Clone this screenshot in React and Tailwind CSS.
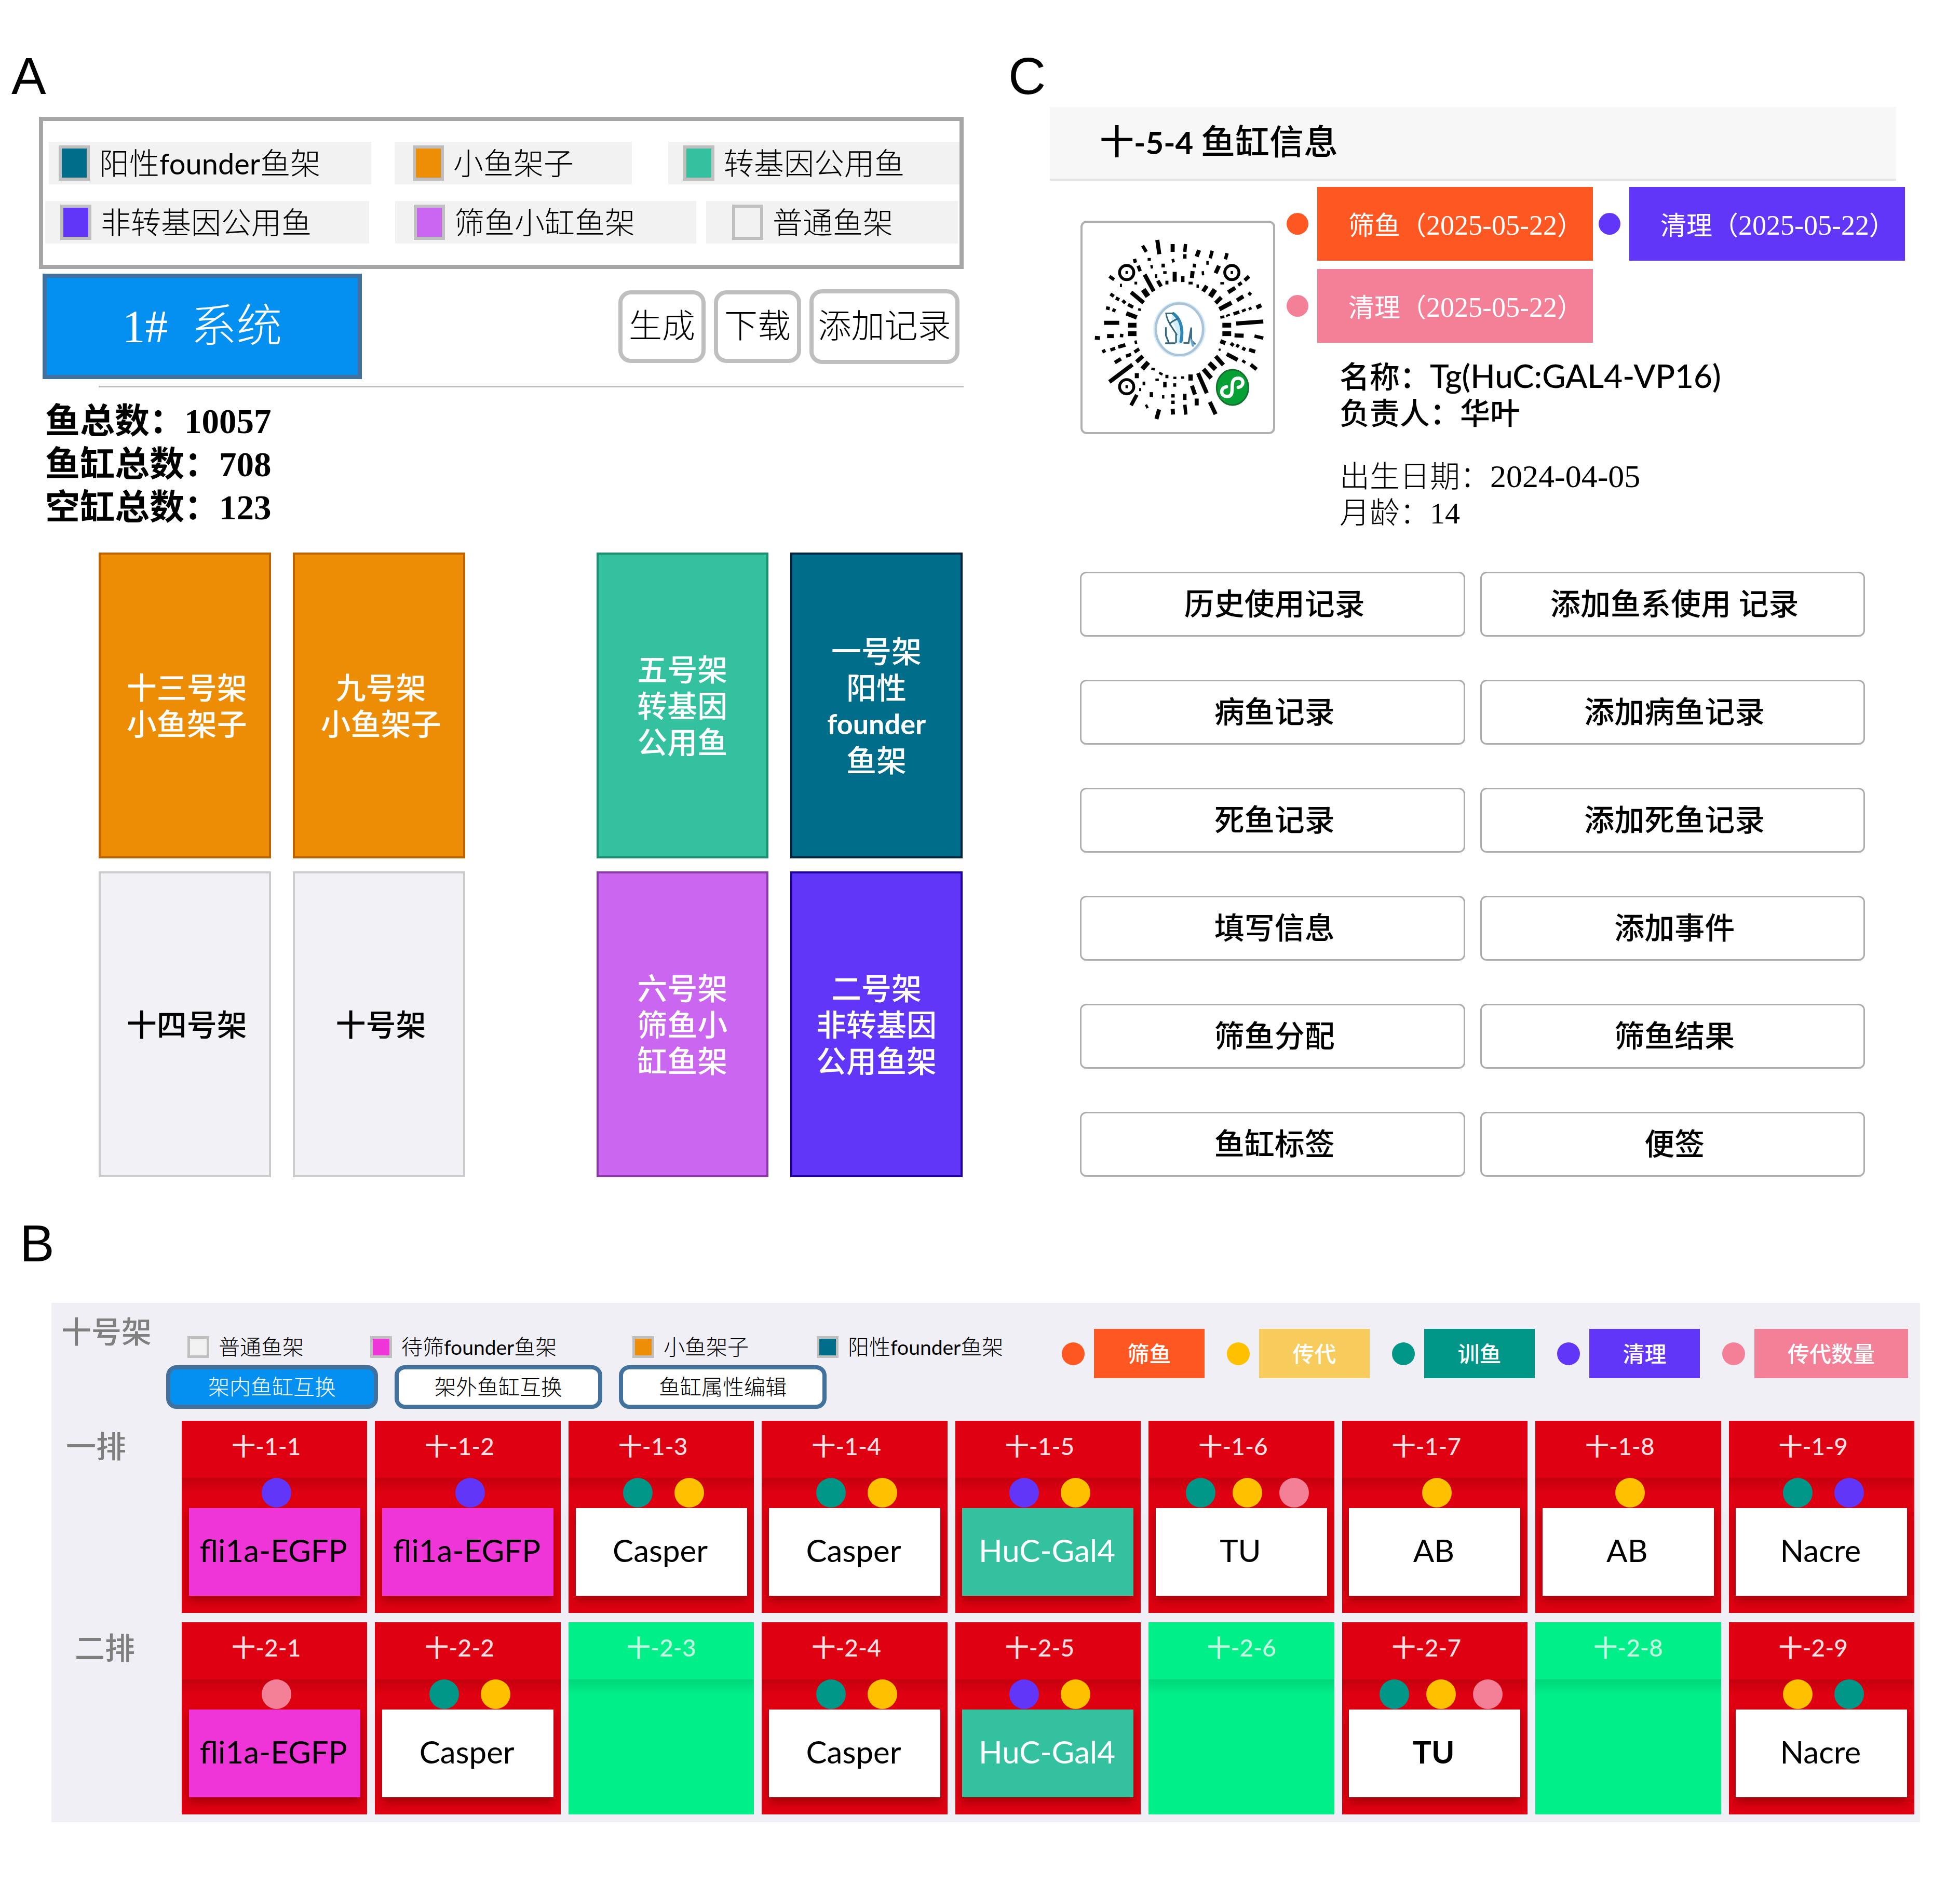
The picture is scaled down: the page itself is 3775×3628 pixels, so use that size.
import React from "react";

const SERIF = "font-['Liberation_Serif','Noto_Sans_CJK_SC',serif]";
const LATO = "font-['Lato','Noto_Sans_CJK_SC',sans-serif]";

const rackLegend = [
  [
    { color: "ml-[19px] bg-[#006e8a]", box: "flex-[621]", text: ["阳性", "founder", "鱼架"] },
    { color: "ml-[35px] bg-[#ee8e06]", box: "flex-[457] ml-[45px]", text: ["小鱼架子"] },
    { color: "ml-[29px] bg-[#33c19f]", box: "flex-[561] ml-[70px]", text: ["转基因公用鱼"] },
  ],
  [
    { color: "ml-[29px] bg-[#6236f9]", box: "flex-[624]", text: ["非转基因公用鱼"] },
    { color: "ml-[36px] bg-[#cb66f2]", box: "flex-[580] ml-[50px]", text: ["筛鱼小缸鱼架"] },
    { color: "ml-[50px] bg-[#f2f2f2]", box: "flex-[485] ml-[19px]", text: ["普通鱼架"] },
  ],
];

const rackGroups = [
  [
    { lines: ["十三号架", "小鱼架子"], style: "bg-[#ed8d05] border-[#bd6300] text-white pl-2" },
    { lines: ["九号架", "小鱼架子"], style: "bg-[#ed8d05] border-[#bd6300] text-white pl-2" },
    { lines: ["十四号架"], style: "bg-[#f1f1f6] border-[#cccccc] text-black pl-2" },
    { lines: ["十号架"], style: "bg-[#f1f1f6] border-[#cccccc] text-black pl-2" },
  ],
  [
    { lines: ["五号架", "转基因", "公用鱼"], style: "bg-[#33c19f] border-[#1b8f70] text-white" },
    { lines: ["一号架", "阳性", "founder", "鱼架"], style: "bg-[#006e8a] border-[#00243f] text-white" },
    { lines: ["六号架", "筛鱼小", "缸鱼架"], style: "bg-[#ca66f0] border-[#8b3aaa] text-white" },
    { lines: ["二号架", "非转基因", "公用鱼架"], style: "bg-[#6236f9] border-[#1c00a2] text-white" },
  ],
];

const actions = [
  "历史使用记录", "添加鱼系使用 记录",
  "病鱼记录", "添加病鱼记录",
  "死鱼记录", "添加死鱼记录",
  "填写信息", "添加事件",
  "筛鱼分配", "筛鱼结果",
  "鱼缸标签", "便签",
];

const DOT = {
  blue: "bg-[#6236f9]",
  teal: "bg-[#009688]",
  gold: "bg-[#ffc000]",
  pink: "bg-[#f48098]",
};

const tankRows = [
  {
    name: "一排",
    pad: "pl-[28px]",
    tanks: [
      { id: "十-1-1", dots: ["blue"], label: "fli1a-EGFP", kind: "magenta" },
      { id: "十-1-2", dots: ["blue"], label: "fli1a-EGFP", kind: "magenta" },
      { id: "十-1-3", dots: ["teal", "gold"], label: "Casper", kind: "white" },
      { id: "十-1-4", dots: ["teal", "gold"], label: "Casper", kind: "white" },
      { id: "十-1-5", dots: ["blue", "gold"], label: "HuC-Gal4", kind: "green" },
      { id: "十-1-6", dots: ["teal", "gold", "pink"], label: "TU", kind: "white" },
      { id: "十-1-7", dots: ["gold"], label: "AB", kind: "white" },
      { id: "十-1-8", dots: ["gold"], label: "AB", kind: "white" },
      { id: "十-1-9", dots: ["teal", "blue"], label: "Nacre", kind: "white" },
    ],
  },
  {
    name: "二排",
    pad: "pl-[45px]",
    tanks: [
      { id: "十-2-1", dots: ["pink"], label: "fli1a-EGFP", kind: "magenta" },
      { id: "十-2-2", dots: ["teal", "gold"], label: "Casper", kind: "white" },
      { id: "十-2-3" },
      { id: "十-2-4", dots: ["teal", "gold"], label: "Casper", kind: "white" },
      { id: "十-2-5", dots: ["blue", "gold"], label: "HuC-Gal4", kind: "green" },
      { id: "十-2-6" },
      { id: "十-2-7", dots: ["teal", "gold", "pink"], label: "TU", kind: "whiteBold" },
      { id: "十-2-8" },
      { id: "十-2-9", dots: ["gold", "teal"], label: "Nacre", kind: "white" },
    ],
  },
];

const LABEL = {
  magenta: "bg-[#f035d8] text-black",
  white: "bg-white text-black",
  whiteBold: "bg-white text-black font-bold",
  green: "bg-[#33c19f] text-white",
};

const tankLegend = [
  { color: "bg-[#f2f2f2]", text: ["普通鱼架"] },
  { color: "bg-[#f035d8]", text: ["待筛", "founder", "鱼架"] },
  { color: "bg-[#ee8e06]", text: ["小鱼架子"] },
  { color: "bg-[#006e8a]", text: ["阳性", "founder", "鱼架"] },
];

const eventLegend = [
  { dot: "bg-[#ff5722]", box: "bg-[#ff5722] w-[213px]", text: "筛鱼" },
  { dot: "bg-[#ffc000]", box: "bg-[#f8cc5c] w-[213px]", text: "传代" },
  { dot: "bg-[#009688]", box: "bg-[#009688] w-[213px]", text: "训鱼" },
  { dot: "bg-[#6236f9]", box: "bg-[#6236f9] w-[213px]", text: "清理" },
  { dot: "bg-[#f48098]", box: "bg-[#f48098] w-[296px]", text: "传代数量" },
];

// Radial code strokes: x1, y1, x2, y2 and an optional width.
const marks = [
  [418,212,440,248],[505,178,517,262,24],[596,202,596,248,24],[672,202,668,248],[752,238,738,276,24],[830,242,818,286],
  [918,256,908,292],[668,262,668,288],[370,290,376,312],[448,292,467,292,16],[470,326,474,346,14],[596,290,602,310,16],
  [540,318,540,340],[726,318,724,340],[802,302,802,324,14],[870,330,850,374,24],[774,362,776,386,14],[392,330,404,362],
  [550,362,550,378],[498,380,498,402,14],[714,362,710,402,24],[608,366,608,424,24],[656,392,656,426],[222,392,250,412],
  [430,382,484,480,24],[508,418,528,452,22],[562,418,562,440,18],[702,424,702,440,24],[744,440,744,460,14],[378,424,378,440,16],
  [290,436,290,456,12],[422,470,450,510,32],[350,486,424,548,24],[798,448,776,482,24],[846,470,818,512,30],[884,516,850,550,24],
  [1048,392,1022,416,22],[1004,430,984,444],[966,460,924,486,24],[878,433,900,433,14],[1058,488,1046,502],[1014,510,976,534,24],
  [944,548,872,586,26],[1120,562,1092,576,24],[1062,578,1046,586,16],[1028,588,1006,598,16],[990,602,956,614],[934,618,912,626,12],
  [902,630,878,634,16],[972,670,1132,658,24],[890,680,942,680,28],[890,730,942,730,28],[962,740,1016,742,24],[1080,744,1132,756],
  [878,774,908,786,24],[940,786,956,800],[972,796,988,806],[1008,814,1026,824],[1048,824,1084,836,22],[872,818,876,830,12],
  [916,850,980,884,24],[1008,888,1026,900,16],[1058,912,1092,940,22],[850,862,896,914,24],[812,902,850,940,28],[778,938,824,992,26],
  [746,962,798,1080,24],[702,970,702,1006,26],[646,988,664,988,14],[600,990,618,990,14],[710,1036,728,1088,24],[738,1112,738,1152,24],
  [816,1132,850,1204,24],[668,1084,668,1120],[668,1148,674,1206],[596,1172,598,1206,24],[598,1086,598,1106],[598,1124,598,1144],
  [608,1022,608,1042,18],[550,1014,550,1046],[562,972,562,992,18],[516,960,536,970,14],[470,936,490,940,14],[494,1002,514,1000,14],
  [540,1092,540,1112,14],[470,1074,470,1104],[516,1176,500,1232,24],[438,1148,448,1168,14],[426,1012,426,1034,16],[404,1050,404,1068,12],
  [384,1090,350,1152,22],[384,962,384,992,24],[452,898,416,938,28],[420,862,382,896,24],[398,820,370,838],[350,852,320,862],
  [290,878,254,900,22],[358,912,222,1014,24],[376,770,380,790,14],[332,680,382,680,28],[332,730,382,730,28],[284,740,304,742],
  [208,744,248,744,24],[136,754,166,756,22],[316,796,274,808,22],[256,816,228,826],[198,828,180,838],[190,666,280,666,24],
  [322,610,384,634,26],[392,586,408,590,14],[202,578,224,582],[240,588,258,596],[332,558,362,574],[300,534,316,550],
  [260,520,280,530],[228,496,248,510],
];

function Mixed({ parts, latin }) {
  return (
    <span>
      {parts.map((p) => (/^[a-z]/.test(p) ? <span key={p} className={latin}>{p}</span> : p))}
    </span>
  );
}

function RadialCode() {
  return (
    <svg viewBox="63 77 1127 1232" preserveAspectRatio="none" className="block h-full w-full" role="img" aria-label="code">
      <g stroke="#000">
        {marks.map(([x1, y1, x2, y2, w], i) => (
          <line key={i} x1={x1} y1={y1} x2={x2} y2={y2} strokeWidth={w || 20} />
        ))}
      </g>
      {[[324, 370], [946, 370], [324, 1042]].map(([x, y]) => (
        <g key={`${x}-${y}`}>
          <circle cx={x} cy={y} r="42" fill="#fff" stroke="#000" strokeWidth="17" />
          <rect x={x - 7} y={y - 9} width="14" height="18" />
        </g>
      ))}
      <ellipse cx="636" cy="704" rx="142" ry="152" fill="#f3faff" stroke="#d9ecf9" strokeWidth="26" />
      <ellipse cx="636" cy="704" rx="140" ry="152" fill="#fdfeff" stroke="#a9c3d8" strokeWidth="14" />
      <g fill="none" strokeLinecap="round">
        <path d="M606 640 L640 720 L640 775" stroke="#cfeeff" strokeWidth="34" />
        <path d="M600 612 C640 640 662 700 645 775" stroke="#2d86b4" strokeWidth="18" />
        <path d="M556 610 H600 M558 612 C560 650 590 690 620 735 M628 640 C600 655 575 665 582 680" stroke="#34657c" strokeWidth="9" />
        <path d="M556 696 V740 L572 780 M556 786 H608 M616 735 V780" stroke="#34657c" strokeWidth="10" />
        <path d="M664 784 H690 L706 694 V770 L728 790" stroke="#3f6d83" strokeWidth="10" />
        <path d="M708 770 L716 800" stroke="#63a5cf" strokeWidth="14" />
      </g>
      <ellipse cx="950" cy="1046" rx="94" ry="104" fill="#05a135" stroke="#14702f" strokeWidth="9" />
      <path
        d="M914 1042 C876 1048 876 1098 918 1100 C948 1100 948 1074 948 1046 C948 1012 954 992 984 992 C1020 994 1020 1040 984 1046"
        fill="none"
        stroke="#fff"
        strokeWidth="20"
        strokeLinecap="round"
      />
    </svg>
  );
}

function EventChip({ color, name, date }) {
  return (
    <div className="flex items-center gap-[17px]">
      <span className={`size-[42px] shrink-0 rounded-full ${color}`} />
      <span className={`${SERIF} flex h-[142px] w-[531px] items-center whitespace-nowrap pt-2 pl-[60px] text-[50px] leading-[60px] text-white ${color}`}>
        <span>
          {name}（<span className="text-[54px] leading-none">{date}</span>）
        </span>
      </span>
    </div>
  );
}

function PanelA() {
  return (
    <section className="pr-[74px] pl-[75px]">
      <h2 className="-ml-[53px] font-['Liberation_Sans',sans-serif] text-[100px] leading-[120px]">A</h2>
      <div className={`${LATO} mt-[19px] flex flex-col gap-8 border-8 border-[#a6a6a6] pt-10 pb-[41px]`}>
        {rackLegend.map((row, r) => (
          <div key={r} className={r === 0 ? "flex pl-[11px]" : "flex pr-[3px] pl-1"}>
            {row.map((item) => (
              <div key={item.text[0]} className={`flex h-[82px] items-center gap-[18px] whitespace-nowrap bg-[#f2f2f2] text-[58px] leading-[70px] font-light ${item.box}`}>
                <span className={`h-[68px] w-[60px] shrink-0 border-[6px] border-[#bfbfbf] ${item.color}`} />
                <Mixed parts={item.text} latin="text-[56px] font-normal" />
              </div>
            ))}
          </div>
        ))}
      </div>
      <div className={`${SERIF} mt-[9px] flex items-center justify-between pr-2 pl-[7px]`}>
        <button className="h-[203px] w-[615px] border-8 border-[#41719c] bg-[#0390f0] text-[88px] leading-[100px] font-light whitespace-pre text-white">
          1#&nbsp; 系统
        </button>
        <div className="flex items-center gap-4 text-[64px] leading-[76px] font-light whitespace-nowrap">
          <button className="h-[140px] w-[168px] rounded-3xl border-8 border-[#bfbfbf]">生成</button>
          <button className="h-[140px] w-[168px] rounded-3xl border-8 border-[#bfbfbf]">下载</button>
          <button className="h-[144px] w-[289px] rounded-3xl border-8 border-[#bfbfbf]">添加记录</button>
        </div>
      </div>
      <hr className="mt-[13px] ml-[115px] border-t-[3px] border-[#bfbfbf]" />
      <div className={`${SERIF} mt-6 pl-[12px] text-[67px] leading-[83px] font-bold`}>
        <p>鱼总数：10057</p>
        <p>鱼缸总数：708</p>
        <p>空缸总数：123</p>
      </div>
      <div className="mt-[45px] mr-[2px] ml-[115px] flex gap-[253px]">
        {rackGroups.map((group, g) => (
          <div key={g} className="grid flex-1 grid-cols-2 gap-x-[42px] gap-y-[25px]">
            {group.map((rack) => (
              <button key={rack.lines[0]} className={`${LATO} flex h-[589px] flex-col items-center justify-center border-4 text-[58px] leading-[70px] font-medium ${rack.style}`}>
                {rack.lines.map((line) => (
                  <span key={line} className={line === "founder" ? "text-[54px] font-bold" : ""}>{line}</span>
                ))}
              </button>
            ))}
          </div>
        ))}
      </div>
    </section>
  );
}

function PanelC() {
  return (
    <section>
      <h2 className="pl-[12px] font-['Liberation_Sans',sans-serif] text-[100px] leading-[120px]">C</h2>
      <header className={`${LATO} mr-[123px] ml-[92px] flex h-[142px] items-center border-b-4 border-[#e4e4e4] bg-[#f7f7f7] pb-1 pl-[96px] text-[66px] leading-[80px] font-medium`}>
        <h3>
          十<span className="text-[60px] font-bold">-5-4 </span>鱼缸信息
        </h3>
      </header>
      <div className="flex pl-[151px]">
        <div className="mt-[77px] h-[411px] w-[375px] shrink-0 overflow-hidden rounded-xl border-4 border-[#b0b0b0]">
          <RadialCode />
        </div>
        <div className="mt-[12px] ml-[22px]">
          <div className="grid w-max grid-cols-2 gap-x-[11px] gap-y-4">
            <EventChip color="bg-[#ff5722]" name="筛鱼" date="2025-05-22" />
            <EventChip color="bg-[#6236f9]" name="清理" date="2025-05-22" />
            <EventChip color="bg-[#f48098]" name="清理" date="2025-05-22" />
          </div>
          <div className={`${LATO} mt-[30px] pl-[102px] text-[58px] leading-[70px] font-medium`}>
            <p>名称：<span className="text-[62px] leading-none">Tg(HuC:GAL4-VP16)</span></p>
            <p>负责人：华叶</p>
          </div>
          <div className={`${SERIF} mt-[54px] pl-[102px] text-[58px] leading-[70px] font-light`}>
            <p>出生日期：<span className="text-[62px] leading-none">2024-04-05</span></p>
            <p>月龄：14</p>
          </div>
        </div>
      </div>
      <div className="mt-[77px] mr-[183px] ml-[150px] grid grid-cols-2 gap-x-[29px] gap-y-[83px]">
        {actions.map((label) => (
          <button key={label} className={`${LATO} h-[125px] rounded-xl border-[3px] border-[#adadad] bg-white pb-1 pl-2 text-[58px] leading-[70px] font-medium`}>
            {label}
          </button>
        ))}
      </div>
    </section>
  );
}

function Tank({ tank }) {
  const empty = !tank.label;
  return (
    <div className={`${LATO} h-[370px] ${empty ? "bg-[#00ef89]" : "bg-[#df0011]"}`}>
      <div className={`flex h-[110px] items-center justify-center pb-3 text-[46px] leading-[60px] font-medium ${empty ? "text-[#c4f7e0]" : "pr-8 text-[#ffdfe2]"}`}>
        {tank.id}
      </div>
      <div className={`h-[58px] bg-linear-to-b to-50% ${empty ? "from-[#00d67a] to-[#00ef89]" : "from-[#c4000f] to-[#df0011]"}`}>
        {!empty && (
          <div className={`flex justify-center ${tank.dots.length === 3 ? "gap-[33px] pl-6" : "gap-[42px] pl-2"}`}>
            {tank.dots.map((d) => (
              <span key={d} className={`size-[57px] rounded-full ${DOT[d]}`} />
            ))}
          </div>
        )}
      </div>
      {!empty && (
        <div className={`mx-auto flex h-[169px] w-[330px] items-center justify-center pr-1 pb-2 text-[60px] leading-[72px] shadow-[0_10px_16px_rgba(110,0,0,0.5)] ${LABEL[tank.kind]}`}>
          {tank.label}
        </div>
      )}
    </div>
  );
}

function PanelB() {
  return (
    <section className="mt-[67px]">
      <h2 className="pl-[38px] font-['Liberation_Sans',sans-serif] text-[100px] leading-[120px]">B</h2>
      <div className={`${LATO} mt-[55px] mr-[77px] ml-[99px] bg-[#efeff5] pb-[15px]`}>
        <div className="flex h-[227px] items-start pr-[23px]">
          <h3 className="mt-[20px] w-[221px] shrink-0 pl-[19px] text-[58px] leading-[70px] font-medium text-[#7f7f7f]">十号架</h3>
          <div className="mt-[64px]">
            <div className="grid grid-cols-[352px_505px_355px_auto] pl-[41px]">
              {tankLegend.map((item) => (
                <div key={item.text[0]} className="flex h-[42px] items-center gap-[18px] text-[41px] leading-[42px] font-light whitespace-nowrap">
                  <span className={`size-[42px] shrink-0 border-[5px] border-[#bfbfbf] ${item.color}`} />
                  <Mixed parts={item.text} latin="text-[39px] font-normal" />
                </div>
              ))}
            </div>
            <div className="mt-[14px] flex gap-8 text-[41px] leading-[50px] font-light">
              <button className="h-[84px] w-[408px] rounded-[20px] border-8 border-[#41719c] bg-[#0390f0] text-white">架内鱼缸互换</button>
              <button className="h-[84px] w-[400px] rounded-[20px] border-8 border-[#41719c] bg-white">架外鱼缸互换</button>
              <button className="h-[84px] w-[400px] rounded-[20px] border-8 border-[#41719c] bg-white">鱼缸属性编辑</button>
            </div>
          </div>
          <div className="mt-[50px] ml-auto flex gap-[43px]">
            {eventLegend.map((e) => (
              <div key={e.text} className="flex items-center gap-[18px]">
                <span className={`size-[44px] rounded-full ${e.dot}`} />
                <span className={`flex h-[95px] items-center justify-center text-[42px] leading-[50px] font-medium text-white ${e.box}`}>{e.text}</span>
              </div>
            ))}
          </div>
        </div>
        <div className="flex flex-col gap-[18px] pr-[11px]">
          {tankRows.map((row) => (
            <div key={row.name} className="flex">
              <h4 className={`mt-[14px] w-[251px] shrink-0 text-[58px] leading-[70px] font-medium text-[#7f7f7f] ${row.pad}`}>{row.name}</h4>
              <div className="grid flex-1 grid-cols-9 gap-x-[15px]">
                {row.tanks.map((tank) => (
                  <Tank key={tank.id} tank={tank} />
                ))}
              </div>
            </div>
          ))}
        </div>
      </div>
    </section>
  );
}

export default function App() {
  return (
    <main className="min-h-screen bg-white pt-[86px] pb-[120px] text-black">
      <div className="grid grid-cols-[1930fr_1845fr]">
        <PanelA />
        <PanelC />
      </div>
      <PanelB />
    </main>
  );
}
